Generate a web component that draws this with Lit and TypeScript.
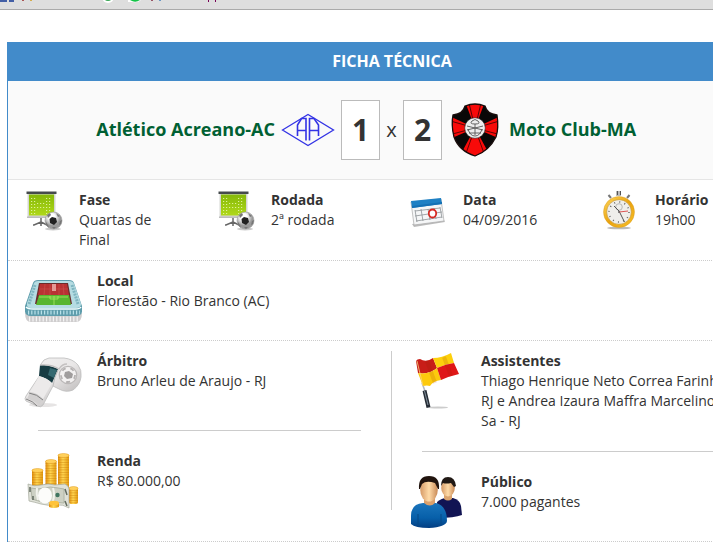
import { LitElement, html, css, svg, nothing, type TemplateResult } from 'lit'
import { customElement, property } from 'lit/decorators.js'

const dots = (cols: number[], rows: number[]) =>
  rows.map((y) => cols.map((x) => svg`<rect x=${x} y=${y} width="1.2" height="1" fill="#def09a"/>`))

const ICONS: Record<string, TemplateResult> = {
  board: html`<svg viewBox="0 1 40 42" width="40" height="42">
    <defs><linearGradient id="g" x2="0" y2="1"><stop stop-color="#85b908"/><stop offset="1" stop-color="#b0d81a"/></linearGradient>
    <radialGradient id="b" cx=".4" cy=".3"><stop offset=".4" stop-color="#fff"/><stop offset="1" stop-color="#999"/></radialGradient></defs>
    <path d="M16 29v8M16 33l-7 3h-1M16 33l6 3" fill="none" stroke="#666" stroke-width="1.500"/>
    <path d="M2.500 3h28v25h-28z" fill="#d5d6d2"/>
    <path d="M4 5.500h25v21H4z" fill="url(#g)"/>
    <path d="M1.500 2.500h30v2.500h-30z" fill="#454a4c"/><path d="M2 27.500h28v1.500H2z" fill="#bcbcbc"/>
    ${dots([6, 9, 21, 24], [9, 12, 15, 18, 21, 24])}${dots([12, 15, 18], [14, 18])}
    <ellipse cx="28" cy="40" rx="8" ry="1.500" fill="#ccc"/>
    <circle cx="28.500" cy="31.500" r="8.500" fill="url(#b)" stroke="#999" stroke-width=".6"/>
    <path d="M27 28l4 1 1 4-3 3-4-2-.5-4z" fill="#222"/>
    <path d="M22 26l3-2 1 2-3 3zM31 24l4 3-2 1zM35 32l2-1-1 4-2 1zM21 33l2 3 1 3-3-3zM27 38h4l-2 2z" fill="#777"/>
  </svg>`,
  calendar: html`<svg viewBox="0 0 36 36" width="36" height="36">
    <path d="M2 28L34 24l1 2-31 5z" fill="#bbb"/>
    <path d="M1 6L31 3l3 22L4 29z" fill="#f5f6f7" stroke="#aaa" stroke-width=".7"/>
    <path d="M1 5L31 2l1 6L2 12z" fill="#1e80c4"/><path d="M2 10L32 6v2L2 12z" fill="#1470b4"/>
    <path d="M5 15l25-3M5 20l27-4M6 25l26-4M5 14l2 12M11 13l2 12M18 13l2 11M24 12l2 11M30 11l2 11" fill="none" stroke="#8d9295" stroke-width=".8"/>
    <ellipse cx="22.500" cy="17.500" rx="3.700" ry="4" fill="#fff" stroke="#d62a22" stroke-width="1.800"/>
  </svg>`,
  clock: html`<svg viewBox="0 0 34 40" width="34" height="40">
    <defs><linearGradient id="o" x2="1" y2="1"><stop stop-color="#ffd75c"/><stop offset=".5" stop-color="#e9a310"/><stop offset="1" stop-color="#f8c12a"/></linearGradient></defs>
    <ellipse cx="17" cy="38" rx="12" ry="1.300" fill="#bbb"/>
    <path d="M14 1h5v5h-5z" fill="#bbb"/><path d="M15 1h1v4h-1zM18 1h1v4h-1z" fill="#555"/>
    <path d="M6.500 5l2.500 3M27.500 5L25 8" stroke="#777" stroke-width="2"/>
    <circle cx="17" cy="22" r="15.500" fill="url(#o)" stroke="#d5941a" stroke-width=".4"/>
    <circle cx="17" cy="22" r="12.300" fill="#efeeeb" stroke="#bd8b24" stroke-width=".5"/>
    <circle cx="17" cy="22" r="10" fill="none" stroke="#666" stroke-width="1.500" stroke-dasharray="1 4.236"/>
    <circle cx="17" cy="17" r="3.300" fill="none" stroke="#aaa" stroke-width=".8"/>
    <path d="M17 21l5.500 11M17 21l-5-5" stroke="#555" stroke-width="1"/>
    <path d="M17 22l9-1" stroke="#d55" stroke-width="1"/><circle cx="17" cy="22" r="1" fill="#666"/>
  </svg>`,
  stadium: html`<svg viewBox="0 -3 58 49" width="58" height="49">
    <path d="M0 34q0 9 6 9h45q6 0 6-9z" fill="#cfcdce"/>
    <path d="M4 40h49" stroke="#f4f4f4" stroke-width="5" stroke-dasharray="1.200 2.200"/>
    <path d="M8 4q1-3 5-3h31q4 0 5 3l8 23v6q-1 4-6 4H6q-5 0-6-4v-6z" fill="#5e9dac"/>
    <path d="M9 4q1-2 4-2h31q4 0 5 3l7 20q0 4-5 4H6q-5 0-4-5z" fill="#b5dce2"/>
    <path d="M10 6L4 25M47 6l6 19" stroke="#7fb5c0" stroke-width="3" stroke-dasharray="2 1"/>
    <path d="M14 4h29l4 21H10z" fill="#6b2c2c"/>
    <path d="M15 5h27l2 11H13z" fill="#b93233"/>
    <path d="M20 5l-1 11M25 5v11M34 5v11M38 5l1 11M15 10h28" stroke="#c94f4c" stroke-width=".7"/>
    <path d="M27 5h4v7h-4z" fill="#e59a96"/>
    <path d="M14 16h30l2 10H11z" fill="#58b62f"/>
    <path d="M29 17v9M14 18h29M25 17v3h8v-3" fill="none" stroke="#a9ea63" stroke-width=".8"/>
    <path d="M1 28q2 2 7 2h42q5 0 6-2" fill="none" stroke="#f4ffff" stroke-width="1.500"/>
    <path d="M3 33.500h52" stroke="#b9e2e9" stroke-width="4" stroke-dasharray="1.200 2"/>
  </svg>`,
  whistle: html`<svg viewBox="0 0 60 52" width="60" height="52">
    <defs><linearGradient id="w" x2=".8" y2="1"><stop stop-color="#f4f3f3"/><stop offset=".5" stop-color="#e9e7e7"/><stop offset="1" stop-color="#b5b2b2"/></linearGradient></defs>
    <ellipse cx="18" cy="49" rx="14" ry="2" fill="#e6e4e4"/>
    <path d="M16 8Q18 3 24 2h15q9 1 14 7 4 5 3 12-1 8-8 13-7 3-14-1l-6-3-10 19q-2 3-6 1L1 45q-2-2 0-5l14-21z" fill="url(#w)" stroke="#bbb" stroke-width=".8"/>
    <path d="M15 9q9 0 18 4l-6 14q-5-5-13-7z" fill="#173c43"/><path d="M25 12l7 2-3 8-6-3z" fill="#356970"/>
    <path d="M15 9q12-1 19 4 3-5 8-5" fill="none" stroke="#c4c1c1" stroke-width="1.300"/>
    <path d="M33 14q-4 8-5 16" fill="none" stroke="#bbb"/>
    <path d="M14 20q8 2 13 7L18 43q-6-5-13-6z" fill="#eceaea"/>
    <path d="M5 36q8 1 13 7l-4 6q-5-5-12-6z" fill="#d2d0d0"/><path d="M4 37q8 1 14 7M1 43q7 2 11 7" stroke="#777" stroke-width=".9" fill="none"/>
    <circle cx="43" cy="19" r="8.700" fill="#f3f1f1" stroke="#bbb8b8" stroke-width="1.300"/>
    <circle cx="43" cy="19" r="7" fill="none" stroke="#b5b2b2" stroke-width="1.800" stroke-dasharray="4 4.796"/>
    <path d="M40 16l4-1 4 3-1 4-5 1-3-3z" fill="#a09d9d"/>
  </svg>`,
  money: html`<svg viewBox="0 0 52 58" width="52" height="58">
    <defs><linearGradient id="m"><stop stop-color="#e08d0d"/><stop offset=".45" stop-color="#ffd652"/><stop offset="1" stop-color="#e39a10"/></linearGradient></defs>
    ${[[4, 18, 22, 11], [17.5, 9, 30, 11], [30, 3, 42, 11], [41, 36, 17, 9]].map(([x, y, h, w]) => svg`
      <rect x=${x} y=${y} width=${w} height=${h} rx="2" fill="url(#m)"/>
      <path d="M${x + w / 2} ${y + 3}v${h - 4}" stroke="#c77b08" stroke-opacity=".5" stroke-width=${w} stroke-dasharray=".7 1.800"/>
      <ellipse cx=${x + w / 2} cy=${y + 1.5} rx=${w / 2} ry="2" fill="#ffd05b" stroke="#e19c20" stroke-width=".5"/>`)}
    <path d="M0 33q6 3 13 1t14 0l10-1q4 2 4 5v19q-6-4-13-3-8 1-15-1T1 50z" fill="#dfe1d8" stroke="#a5a99c" stroke-width=".7"/>
    <path d="M3 37q7 2 13 0t14 0l6 1v14q-7-1-13 0-9 0-19-4z" fill="#cdd1c4" stroke="#b0b5a6" stroke-width="1"/>
    <path d="M2 36v5M5 45v4M37 38l2 6M37 50l2 5" stroke="#626b5f" stroke-width="1.500"/>
    <ellipse cx="17" cy="44.500" rx="7" ry="8" fill="#fcfcfa"/>
    <path d="M9 37q-1 6 1 12M25 37q2 6 0 13" stroke="#f2f3ed" stroke-width="2" fill="none"/>
    <circle cx="29.500" cy="44" r="2.200" fill="#3f7560"/>
    <path d="M21 52h10v4q-5 2-10 0z" fill="url(#m)"/><ellipse cx="26" cy="52" rx="5" ry="2.300" fill="#ffc33a"/>
  </svg>`,
  flag: html`<svg viewBox="0 0 46 60" width="46" height="60">
    <ellipse cx="22" cy="52.500" rx="10" ry="1" fill="#ccc"/>
    <path d="M6 28l3 8" stroke="#b4b8c0" stroke-width="1.500"/><path d="M8.500 35.500l4 17" stroke="#252c35" stroke-width="4"/><path d="M8.500 36l3.500 14" stroke="#82909b"/>
    <path d="M0 6q1-2 4-2 6 4 13-1l4 10q-8 7-19 5z" fill="#c81d18"/>
    <path d="M17 3q9 0 18-5l3 10q-8 1-17 5z" fill="#fdd00c"/>
    <path d="M2 18q11 2 19-5l4 12q-8 1-11 6-3-1-7 0z" fill="#fdca0d"/>
    <path d="M21 13q9-4 17-5l5 11q-9 2-18 6z" fill="#df1717"/>
    <path d="M11 6l8 22M28 2l7 19" stroke="#8c2500" stroke-opacity=".14" stroke-width="4"/>
    <path d="M1 6l6 25" stroke="#f8d482" stroke-width=".8"/>
  </svg>`,
  people: html`<svg viewBox="0 0 54 54" width="54" height="54">
    <defs><linearGradient id="p" x2="0" y2="1"><stop stop-color="#1a75bc"/><stop offset=".6" stop-color="#075fa9"/><stop offset="1" stop-color="#033e82"/></linearGradient>
    <linearGradient id="s"><stop stop-color="#d69a66"/><stop offset=".5" stop-color="#ffdba8"/><stop offset="1" stop-color="#c88955"/></linearGradient></defs>
    <path d="M27 26q5-4 9-4l7 0q7 2 8 8l1 9q-8 3-24 3z" fill="#111453"/>
    <path d="M34 18h8v5q-4 3-8 0z" fill="#dba46f"/><ellipse cx="38" cy="12" rx="6.800" ry="8.500" fill="url(#s)"/>
    <path d="M31 10Q31 1 38 1t8 9l-2 1-3-4q-5 1-8 0z" fill="#211915"/>
    <path d="M1 40q0-12 12-13l13 0q11 3 11 18-1 6-18 7Q5 52 1 48z" fill="url(#p)"/>
    <path d="M8 38v12M31 38v11" stroke="#064984"/>
    <path d="M14 22h11v5q-5 5-11 0z" fill="#dca06b"/><ellipse cx="19" cy="14" rx="8.800" ry="11.500" fill="url(#s)"/>
    <path d="M9 13Q8 0 19 0t10 13h-1l-3-6q-9-3-13 1l-2 5z" fill="#21140e"/>
  </svg>`,
  atletico: html`<svg viewBox="0 0 54 34" width="54" height="34">
    <path d="M1.500 17L27 1.500 52.500 17 27 32.500z" fill="#fafafa" stroke="#3434e5" stroke-width="1.300"/>
    <path d="M16.500 23V12l4-6.500h4.500v22M16.500 17.500H25M28.500 27.500v-22H33l4.500 6.500v11M28.500 17.500h9" fill="none" stroke="#3434e5" stroke-width="1.600"/>
  </svg>`,
  moto: html`<svg viewBox="0 0 48 54" width="48" height="54">
    <clipPath id="c"><path d="M14 3Q24-1 34 3q2 8 12 9 2 13-1 22-7 14-21 19Q8 48 3 34 0 22 2 12 12 11 14 3z"/></clipPath>
    <g clip-path="url(#c)"><path d="M0 0h48v54H0z" fill="#090707"/>
      <path d="M24 25L13-4h22zM24 25L-6 11v27zM24 25l30-14v27zM24 25L6 58h36z" fill="#f80a09"/>
      <path d="M24 25L17-4M24 25l7-29M24 25L-4 17M24 25L-6 33M24 25l28-8M24 25l30 8M24 25L13 56M24 25l11 31" stroke="#4a0505" stroke-width=".9"/>
    </g>
    <path d="M14 3Q24-1 34 3q2 8 12 9 2 13-1 22-7 14-21 19Q8 48 3 34 0 22 2 12 12 11 14 3z" fill="none" stroke="#190d0c" stroke-width="1.300"/>
    <circle cx="24" cy="25" r="10.300" fill="#eee" stroke="#222" stroke-width=".6"/>
    <path d="M21 18q3-3 6 0t-3 3-3-3M24 21v11M16 23l16 4M32 23l-16 4M17 26q2 7 7 7t7-7M18 30h12" fill="none" stroke="#555" stroke-width=".9"/>
  </svg>`,
}

@customElement('match-icon')
export class MatchIcon extends LitElement {
  @property() name = ''

  static styles = css`
    :host { display: block; }
    svg { display: block; overflow: visible; }
  `

  render() {
    return ICONS[this.name] ?? nothing
  }
}

// One fact of the match sheet: icon, bold label and its value lines.
@customElement('match-info')
export class MatchInfo extends LitElement {
  @property() icon = ''
  @property() label = ''
  @property({ attribute: false }) lines: string[] = []

  static styles = css`
    :host {
      display: flex;
      align-items: flex-start;
      white-space: nowrap;
    }
    .icon {
      flex: none;
      box-sizing: border-box;
      width: var(--icon-width, 71px);
      padding: var(--icon-pad, 0 0 0 17px);
    }
    .label { font-weight: 700; }
  `

  render() {
    return html`
      <div class="icon"><match-icon name=${this.icon}></match-icon></div>
      <div>
        <div class="label">${this.label}</div>
        ${this.lines.map((line) => html`<div>${line}</div>`)}
      </div>
    `
  }
}

@customElement('app-root')
export class AppRoot extends LitElement {
  static styles = css`
    :host {
      display: block;
      height: 542px;
      overflow: hidden;
      background: #fff;
      color: #333;
      font: 14px/20px 'Open Sans', sans-serif;
    }
    .toolbar {
      height: 9px;
      overflow: hidden;
      background: #dedede;
      border-bottom: 1px solid #aaa;
    }
    .toolbar svg { display: block; }
    .sheet {
      box-sizing: border-box;
      width: 770px;
      margin: 32px 0 0 7px;
      border: solid #428bca;
      border-width: 0 1px;
    }
    .title {
      height: 39px;
      background: #428bca;
      color: #fff;
      font-size: 16px;
      font-weight: 700;
      line-height: 38px;
      text-align: center;
    }
    .score {
      display: grid;
      grid-template-columns: 333px 101px 1fr;
      align-items: center;
      height: 98px;
      background: #fafafa;
      border-bottom: 1px solid #e5e5e5;
    }
    .team {
      display: flex;
      align-items: center;
      color: #006033;
      font-size: 18px;
      font-weight: 700;
    }
    .name { padding-bottom: 2px; }
    .home { justify-content: flex-end; gap: 6px; padding-right: 6px; }
    .away { gap: 10px; padding-left: 9px; }
    .goals { display: flex; align-items: center; justify-content: space-between; }
    .goal {
      box-sizing: border-box;
      width: 39px;
      height: 60px;
      border: 1px solid #bbb;
      background: #fff;
      font-size: 30px;
      font-weight: 700;
      line-height: 58px;
      text-align: center;
    }
    .versus { padding-bottom: 1px; font-size: 20px; }
    .row { border-bottom: 1px dotted #ccc; }
    .facts {
      display: grid;
      grid-template-columns: repeat(4, 192px);
      box-sizing: border-box;
      height: 81px;
      padding-top: 10px;
    }
    .place {
      box-sizing: border-box;
      height: 80px;
      padding-top: 10px;
    }
    .large { --icon-width: 89px; --icon-pad: 5px 0 0 17px; }
    .calendar { --icon-pad: 6px 0 0 18px; }
    .clock { --icon-pad: 0 0 0 18px; }
    .whistle { --icon-pad: 5px 0 0 17px; }
    .money { --icon-pad: 0 0 0 20px; }
    .flag { --icon-pad: 4px 0 0 24px; }
    .people { --icon-pad: 4px 0 0 18px; }
    .halves {
      display: grid;
      grid-template-columns: 384px 384px;
      padding: 10px 0 9px;
      height: 181px;
    }
    .half {
      display: flex;
      flex-direction: column;
      align-items: stretch;
    }
    .left { box-sizing: border-box; height: 159px; border-right: 1px solid #ccc; }
    .rule { height: 1px; margin: 0 30px 20px; background: #ccc; }
    .left .first { height: 79px; }
    .right .first { height: 100px; }
  `

  render() {
    return html`
      <div class="toolbar">
        <svg width="240" height="9">
          <path d="M0 0h7v2H0zM9 0h5v2H9z" fill="#435fa5"/>
          <path d="M22 0h2v1h-2z" fill="#a55"/><path d="M30 0h2v1h-2z" fill="#d4ad4e"/>
          <circle cx="108" cy="-3" r="6" fill="#fff"/><circle cx="108" cy="-3" r="4" fill="#35a552"/>
          <path d="M128 0h13q-3 3-8 2h-5z" fill="#fff"/><path d="M130 0h10q-4 3-8 1z" fill="#15c348"/>
          <path d="M151 0h2v1h-2z" fill="#956"/><path d="M159 0h2v1h-2z" fill="#6997c4"/>
          <path d="M208 0h1v2h-1zM215 0h1v2h-1z" fill="#705"/>
        </svg>
      </div>
      <div class="sheet">
        <div class="title">FICHA TÉCNICA</div>
        <div class="score">
          <div class="team home"><span class="name">Atlético Acreano-AC</span><match-icon name="atletico"></match-icon></div>
          <div class="goals">
            <div class="goal">1</div>
            <div class="versus">x</div>
            <div class="goal">2</div>
          </div>
          <div class="team away"><match-icon name="moto"></match-icon><span class="name">Moto Club-MA</span></div>
        </div>
        <div class="row facts">
          <match-info icon="board" label="Fase" .lines=${['Quartas de', 'Final']}></match-info>
          <match-info icon="board" label="Rodada" .lines=${['2ª rodada']}></match-info>
          <match-info class="calendar" icon="calendar" label="Data" .lines=${['04/09/2016']}></match-info>
          <match-info class="clock" icon="clock" label="Horário" .lines=${['19h00']}></match-info>
        </div>
        <div class="row place">
          <match-info class="large" icon="stadium" label="Local" .lines=${['Florestão - Rio Branco (AC)']}></match-info>
        </div>
        <div class="row halves">
          <div class="half left">
            <match-info class="large whistle first" icon="whistle" label="Árbitro" .lines=${['Bruno Arleu de Araujo - RJ']}></match-info>
            <div class="rule"></div>
            <match-info class="large money" icon="money" label="Renda" .lines=${['R$ 80.000,00']}></match-info>
          </div>
          <div class="half right">
            <match-info class="large flag first" icon="flag" label="Assistentes"
              .lines=${['Thiago Henrique Neto Correa Farinha -', 'RJ e Andrea Izaura Maffra Marcelino de', 'Sa - RJ']}></match-info>
            <div class="rule"></div>
            <match-info class="large people" icon="people" label="Público" .lines=${['7.000 pagantes']}></match-info>
          </div>
        </div>
      </div>
    `
  }
}
